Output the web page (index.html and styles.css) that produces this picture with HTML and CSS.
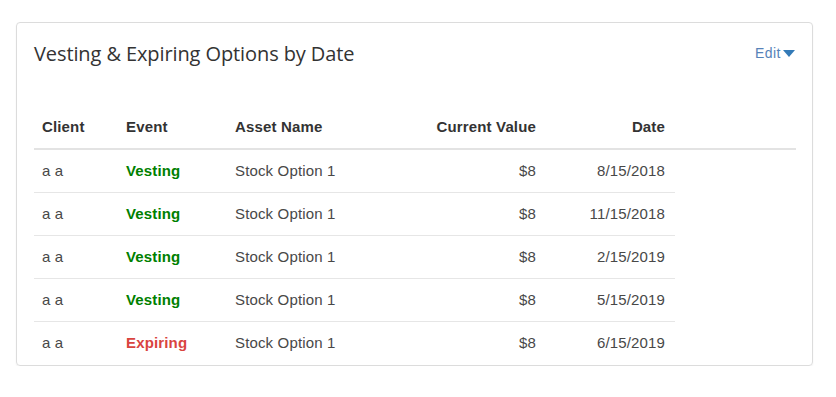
FILE: index.html
```html
<!DOCTYPE html>
<html>
<head>
<meta charset="utf-8">
<link rel="stylesheet" href="styles.css">
</head>
<body>
<div class="card">
  <div class="card-head">
    <h2 class="title">Vesting &amp; Expiring Options by Date</h2>
    <a class="edit">Edit <svg class="caret" width="12" height="7" viewBox="0 0 12 7"><path d="M0 0h12L6 7z" fill="#337ab7"/></svg></a>
  </div>
  <table class="grid">
    <thead>
      <tr>
        <th class="c-client">Client</th>
        <th class="c-event">Event</th>
        <th class="c-asset">Asset Name</th>
        <th class="c-value num">Current Value</th>
        <th class="c-date num">Date</th>
        <th class="c-fill"></th>
      </tr>
    </thead>
    <tbody>
      <tr><td>a a</td><td class="vest">Vesting</td><td>Stock Option 1</td><td class="num">$8</td><td class="num c-date">8/15/2018</td><td class="c-fill"></td></tr>
      <tr><td>a a</td><td class="vest">Vesting</td><td>Stock Option 1</td><td class="num">$8</td><td class="num c-date">11/15/2018</td><td class="c-fill"></td></tr>
      <tr><td>a a</td><td class="vest">Vesting</td><td>Stock Option 1</td><td class="num">$8</td><td class="num c-date">2/15/2019</td><td class="c-fill"></td></tr>
      <tr><td>a a</td><td class="vest">Vesting</td><td>Stock Option 1</td><td class="num">$8</td><td class="num c-date">5/15/2019</td><td class="c-fill"></td></tr>
      <tr><td>a a</td><td class="exp">Expiring</td><td>Stock Option 1</td><td class="num">$8</td><td class="num c-date">6/15/2019</td><td class="c-fill"></td></tr>
    </tbody>
  </table>
</div>
</body>
</html>
```
FILE: styles.css
```css
html, body {
  margin: 0;
  background: #fff;
}
body {
  padding: 22px 23px 0 16px;
  font-family: "Liberation Sans", Arial, sans-serif;
  font-size: 14px;
  color: #333;
}
.card {
  width: 797px;
  box-sizing: border-box;
  height: 344px;
  border: 1px solid #dcdcdc;
  border-radius: 4px;
  box-shadow: 0 1px 2px rgba(0,0,0,0.06);
  padding: 0 16px 0 17px;
}
.card-head {
  display: flex;
  justify-content: space-between;
  align-items: flex-start;
  height: 83px;
}
.title {
  margin: 17px 0 0 0;
  font-family: "Open Sans", sans-serif;
  font-weight: 400;
  font-size: 20px;
  line-height: 28px;
  color: #333;
  letter-spacing: -0.1px;
}
.edit {
  margin-top: 20px;
  margin-right: 1px;
  color: #5682b8;
  font-size: 14px;
  line-height: 20px;
  letter-spacing: 0.5px;
  display: flex;
  align-items: center;
  gap: 2px;
}
.caret {
  display: block;
  margin-top: 1px;
}
.grid {
  width: 762px;
  border-collapse: collapse;
  table-layout: fixed;
  font-size: 15px;
  letter-spacing: 0.15px;
}
.grid th, .grid td {
  box-sizing: border-box;
  padding: 11px 8px;
  line-height: 20px;
  text-align: left;
  white-space: nowrap;
}
.grid th {
  font-weight: 700;
  color: #333;
  border-bottom: 2px solid #e3e3e3;
}
.grid td {
  color: #484848;
  border-top: 1px solid #e6e6e6;
}
.grid tbody tr:first-child td {
  border-top: none;
}
.grid td.c-fill {
  border-top: none;
}
.c-client { width: 84px; }
.c-event { width: 109px; }
.c-asset { width: 201px; }
.c-value { width: 116px; }
.c-date { width: 131px; }
.grid .c-date { padding-right: 10px; }
.grid .num { text-align: right; }
.grid td.vest {
  color: #008000;
  font-weight: 700;
}
.grid td.exp {
  color: #d9443f;
  font-weight: 700;
}
```
